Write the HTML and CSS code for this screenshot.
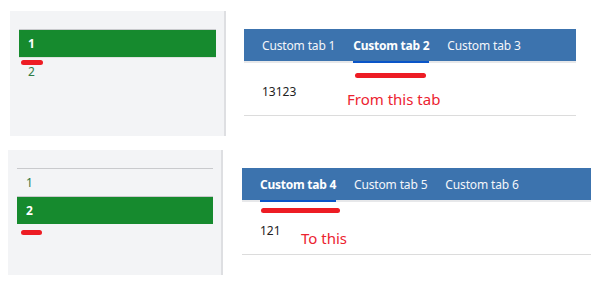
FILE: index.html
```html
<!DOCTYPE html>
<html lang="en">
<head>
  <meta charset="UTF-8">
  <meta name="viewport" content="width=device-width, initial-scale=1.0">
  <title>Custom tabs</title>
  <link rel="stylesheet" href="styles.css">
</head>
<body>
  <!-- Before: tab 2 selected -->
  <div class="row row-first">
    <div class="side-panel">
      <div class="side-item active">1</div>
      <div class="side-item">2</div>
      <span class="mark mark-side-first"></span>
    </div>

    <div class="tabs tabs-first">
      <div class="tab-bar">
        <span class="tab">Custom tab 1</span>
        <span class="tab selected">Custom tab 2</span>
        <span class="tab">Custom tab 3</span>
      </div>
      <div class="tab-content">13123</div>
      <span class="mark mark-tab-first"></span>
      <span class="note note-first">From this tab</span>
    </div>
  </div>

  <!-- After: tab 4 selected -->
  <div class="row row-second">
    <div class="side-panel">
      <div class="side-item">1</div>
      <div class="side-item active">2</div>
      <span class="mark mark-side-second"></span>
    </div>

    <div class="tabs tabs-second">
      <div class="tab-bar">
        <span class="tab selected">Custom tab 4</span>
        <span class="tab">Custom tab 5</span>
        <span class="tab">Custom tab 6</span>
      </div>
      <div class="tab-content">121</div>
      <span class="mark mark-tab-second"></span>
      <span class="note note-second">To this</span>
    </div>
  </div>
</body>
</html>
```

FILE: styles.css
```css
/* Basic styles */
body {
    margin: 0;
    background: #fff;
    font-family: "Noto Sans", "Open Sans", sans-serif;
    font-size: 12px;
    color: #222;
}

.row {
    display: flex;
    align-items: flex-start;
}
.row-first {
    padding: 11px 0 0 10px;
    gap: 18px;
}
.row-second {
    padding: 14px 0 0 8px;
    gap: 19px;
}

/* Side menu */
.side-panel {
    position: relative;
    box-sizing: border-box;
    width: 216px;
    height: 125px;
    padding: 18px 8px 0 9px;
    background: #f3f4f6;
    border-right: 2px solid #dedfe2;
}
.row-second .side-panel {
    width: 215px;
}
.side-item {
    height: 27px;
    line-height: 27px;
    padding-left: 9px;
    border-top: 1px solid #c9cacd;
    color: #2f7a45;
}
.side-item.active {
    background: #168a2e;
    color: #fff;
    font-weight: bold;
}
.row-first .side-item + .side-item {
    border-top-color: #dfe3df;
}

/* Tabs */
.tabs {
    position: relative;
    margin-top: 18px;
    width: 332px;
}
.tabs-second {
    width: 349px;
}
.tab-bar {
    display: flex;
    gap: 18px;
    height: 32px;
    padding-left: 18px;
    background: #3c73ae;
    border-bottom: 2px solid #e7e8ea;
}
.tab {
    line-height: 34px;
    height: 32px;
    color: #f4f6fa;
    letter-spacing: -0.15px;
    white-space: nowrap;
}
.tab.selected {
    font-weight: bold;
    color: #fff;
    letter-spacing: -0.25px;
    box-shadow: 0 2px 0 #0a55c8;
}
.tab-content {
    height: 53px;
    padding: 20px 0 0 18px;
    box-sizing: border-box;
    border-bottom: 1px solid #dcdcdc;
}

/* Red annotations */
.mark {
    position: absolute;
    height: 5px;
    border-radius: 3px;
    background: #ed1c24;
}
.mark-side-first {
    left: 11px;
    top: 49px;
    width: 22px;
}
.mark-side-second {
    left: 13px;
    top: 80px;
    width: 21px;
}
.mark-tab-first {
    left: 111px;
    top: 44px;
    width: 71px;
}
.mark-tab-second {
    left: 19px;
    top: 40px;
    width: 79px;
}
.note {
    position: absolute;
    color: #ec2330;
    font-size: 15px;
    white-space: nowrap;
}
.note-first {
    left: 103px;
    top: 60px;
}
.note-second {
    left: 59px;
    top: 60px;
}
```
